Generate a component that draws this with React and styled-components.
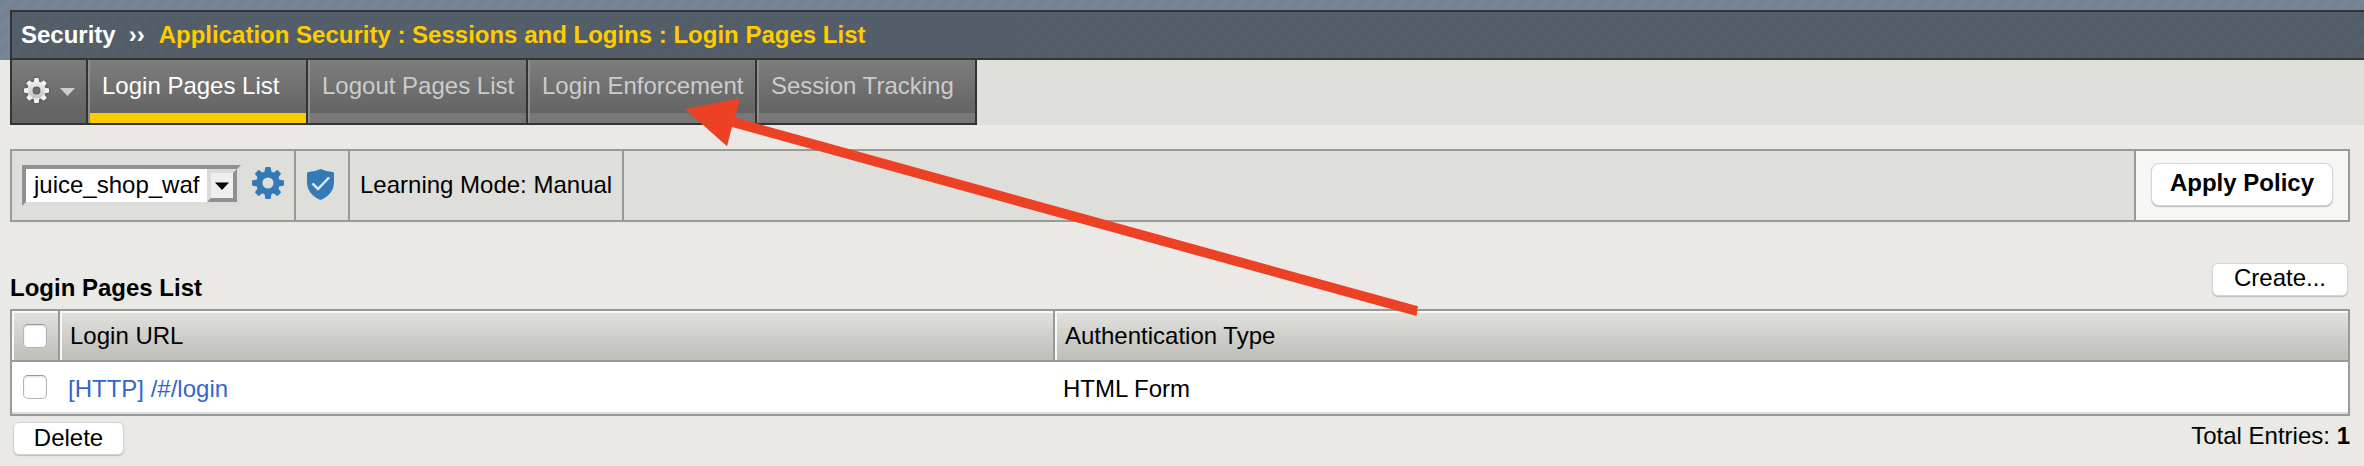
import React from 'react';
import styled, { createGlobalStyle } from 'styled-components';

const Global = createGlobalStyle`
  * { box-sizing: border-box; }
  body {
    margin: 0;
    background: #eae9e5;
    color: #000;
    font: 24px/28px "Liberation Sans", Arial, sans-serif;
    overflow: hidden;
  }
`;

const stripes = (a, b) =>
  `repeating-linear-gradient(135deg, ${a} 0 4.5px, ${b} 6px 10px, ${a} 11.31px)`;

const Page = styled.div`
  position: relative;
  width: 2364px;
  height: 466px;
`;
const TopBand = styled.header`
  height: 60px;
  padding: 10px 0 0 10px;
  background: ${stripes('#748394', '#778697')};
`;
const Breadcrumb = styled.div`
  display: flex;
  height: 50px;
  padding: 9px 0 0 9px;
  border: 2px solid #333;
  border-right: 0;
  background: ${stripes('#525d68', '#545f69')};
  color: #fff;
  font-weight: bold;
  white-space: pre;
`;
const Separator = styled.span`
  margin: 0 14px 0 13px;
`;
const Trail = styled.span`
  color: #fc0;
`;
const TabStrip = styled.nav`
  display: flex;
  height: 65px;
  margin-left: 10px;
  background: #dededa;
`;
const tabFill = 'linear-gradient(#7d7d7d, #646464 53px)';
const MenuTab = styled.div`
  display: flex;
  align-items: center;
  width: 78px;
  padding: 0 0 2px 12px;
  gap: 11px;
  border: solid #333;
  border-width: 0 2px 2px;
  background: ${tabFill};
`;
const Tab = styled.div`
  width: ${p => p.$w}px;
  padding: 12px 0 0 14px;
  border: solid #333;
  border-width: 0 2px 2px 0;
  box-shadow: inset 2px 0 #8e8e8e;
  background: linear-gradient(${p => (p.$active ? '#fc0, #fc0' : '#777, #777')}) 2px 53px / 100% 10px no-repeat,
    ${tabFill};
  color: ${p => (p.$active ? '#fff' : '#ccc')};
  white-space: nowrap;
`;
const PolicyBar = styled.section`
  display: flex;
  width: 2340px;
  height: 73px;
  margin: 24px 0 0 10px;
  border: 2px solid #999;
  background: #dededa;
`;
const PolicyCell = styled.div`
  display: flex;
  align-items: flex-start;
  width: ${p => p.$w}px;
  padding: ${p => p.$pad};
  border-right: 2px solid #999;
  white-space: nowrap;
`;
const Fill = styled.div`
  flex: 1;
`;
const ApplyCell = styled.div`
  width: 214px;
  padding: 12px 0 0 15px;
  border-left: 2px solid #999;
  background: #f7f6f5;
`;
const Select = styled.div`
  display: flex;
  width: 219px;
  height: 41px;
  margin-right: 11px;
  border: 4px solid;
  border-color: #909090 #dcdcdc #dcdcdc #909090;
  background: #fff;
`;
const SelectValue = styled.span`
  width: 181px;
  padding: 2px 0 0 8px;
`;
const SelectArrow = styled.span`
  display: flex;
  align-items: center;
  justify-content: center;
  width: 30px;
  height: 33px;
  border: 4px solid;
  border-color: #dadada #909090 #909090 #dadada;
  background: #efefef;
`;
const GearSlot = styled.span`
  display: flex;
  margin-top: 2px;
`;
const Button = styled.button`
  width: ${p => p.$w}px;
  height: ${p => p.$h}px;
  padding: ${p => p.$pad || '0 0 4px'};
  border: 1px solid #d4d4d2;
  border-radius: ${p => p.$r || 6}px;
  box-shadow: 0 1px 1px #bbb;
  background: #fff;
  color: #000;
  font: inherit;
  font-weight: ${p => (p.$bold ? 'bold' : 'normal')};
  line-height: 28px;
`;
const ListHead = styled.div`
  display: flex;
  justify-content: space-between;
  align-items: flex-start;
  width: 2338px;
  height: 46px;
  margin: 41px 0 0 10px;
`;
const Title = styled.h1`
  margin: 11px 0 0;
  font-size: 24px;
  line-height: 28px;
`;
const Table = styled.div`
  width: 2340px;
  height: 107px;
  margin-left: 10px;
  border: 2px solid #999;
`;
const Row = styled.div`
  display: grid;
  grid-template-columns: 48px 995px 1fr;
`;
const HeadRow = styled(Row)`
  height: 51px;
  border-bottom: 2px solid #999;
  background: linear-gradient(#dfdfdb 4px, #c0bfba 46px);
`;
const HeadCell = styled.div`
  padding: ${p => p.$pad || '11px 0 0 10px'};
  border-right: ${p => (p.$last ? 0 : '2px solid #999')};
  box-shadow: inset 2px 2px #f8f8f6;
`;
const BodyRow = styled(Row)`
  height: 52px;
  border-bottom: 2px solid #ddd;
  background: #fff;
`;
const Cell = styled.div`
  padding: ${p => p.$pad};
`;
const Link = styled.a`
  color: #36c;
`;
const Checkbox = styled.span`
  display: block;
  width: 24px;
  height: 24px;
  border: 1px solid #b4b4b4;
  border-top-color: #999;
  border-radius: 5px;
  background: #fff;
  box-shadow: inset 0 1px 2px #ddd;
`;
const Footer = styled.footer`
  display: flex;
  justify-content: space-between;
  align-items: flex-start;
  width: 2337px;
  margin: 6px 0 0 13px;
`;
const Arrow = styled.svg`
  position: absolute;
  left: 0;
  top: 0;
  pointer-events: none;
`;
const GearSvg = styled.svg`
  overflow: visible;
  filter: ${p => (p.$shadow ? 'drop-shadow(0 0 1px #444)' : 'none')};
`;

function Gear({ size, fill, hole, shadow }) {
  const angles = [0, 45, 90, 135, 180, 225, 270, 315];
  const maskId = shadow ? 'menu-gear' : 'policy-gear';
  return (
    <GearSvg width={size} height={size} viewBox="0 0 32 32" $shadow={shadow}>
      <defs>
        <linearGradient id="silver" gradientUnits="userSpaceOnUse" x1="0" y1="2" x2="0" y2="30">
          <stop offset="0" stopColor="#f4f4f4" />
          <stop offset="1" stopColor="#b8b8b8" />
        </linearGradient>
        <mask id={maskId}>
          <rect width="32" height="32" fill="#fff" />
          <circle cx="16" cy="16" r={hole} fill="#000" />
        </mask>
      </defs>
      <g mask={`url(#${maskId})`} fill={fill}>
        <circle cx="16" cy="16" r="11.8" />
        {angles.map(a => (
          <path key={a} d="M12.4 6 13.2 .8Q13.4 0 14.2 0H17.8Q18.6 0 18.8 .8L19.6 6Z" transform={`rotate(${a} 16 16)`} />
        ))}
      </g>
    </GearSvg>
  );
}

export default function App() {
  return (
    <Page>
      <Global />
      <TopBand>
        <Breadcrumb>
          Security<Separator>››</Separator>
          <Trail>Application Security : Sessions and Logins : Login Pages List</Trail>
        </Breadcrumb>
      </TopBand>
      <TabStrip>
        <MenuTab>
          <Gear size={25} fill="url(#silver)" hole={5} shadow />
          <svg width="15" height="9" viewBox="0 0 15 9" overflow="visible">
            <path d="M0 2H15L7.5 10Z" fill="#ccc" />
          </svg>
        </MenuTab>
        <Tab $w={220} $active>Login Pages List</Tab>
        <Tab $w={220}>Logout Pages List</Tab>
        <Tab $w={229}>Login Enforcement</Tab>
        <Tab $w={220}>Session Tracking</Tab>
      </TabStrip>
      <PolicyBar>
        <PolicyCell $w={284} $pad="14px 0 0 10px">
          <Select>
            <SelectValue>juice_shop_waf</SelectValue>
            <SelectArrow>
              <svg width="14" height="8" viewBox="0 0 14 8"><path d="M0 .5H14L7 8Z" /></svg>
            </SelectArrow>
          </Select>
          <GearSlot><Gear size={32} fill="#337ab7" hole={5.6} /></GearSlot>
        </PolicyCell>
        <PolicyCell $w={54} $pad="18px 0 0 11px">
          <svg width="27" height="31" viewBox="0 0 27 31">
            <path d="M13.5 0Q20 3 26 3Q27 3 27 5V13Q27 25 13.5 31Q0 25 0 13V5Q0 3 1 3Q7 3 13.5 0Z" fill="#337ab7" />
            <path d="M5.5 14.5 11 20 22 8.5" fill="none" stroke="#dcebf6" strokeWidth="2.5" />
          </svg>
        </PolicyCell>
        <PolicyCell $w={274} $pad="20px 0 0 10px">Learning Mode: Manual</PolicyCell>
        <Fill />
        <ApplyCell><Button $w={182} $h={43} $r={8} $bold $pad="0 0 3px">Apply Policy</Button></ApplyCell>
      </PolicyBar>
      <ListHead>
        <Title>Login Pages List</Title>
        <Button $w={136} $h={33}>Create...</Button>
      </ListHead>
      <Table>
        <HeadRow>
          <HeadCell $pad="13px 0 0 11px"><Checkbox /></HeadCell>
          <HeadCell>Login URL</HeadCell>
          <HeadCell $last>Authentication Type</HeadCell>
        </HeadRow>
        <BodyRow>
          <Cell $pad="13px 0 0 11px"><Checkbox /></Cell>
          <Cell $pad="13px 0 0 8px"><Link>[HTTP] /#/login</Link></Cell>
          <Cell $pad="13px 0 0 8px">HTML Form</Cell>
        </BodyRow>
      </Table>
      <Footer>
        <Button $w={111} $h={33} $pad="0 0 1px">Delete</Button>
        <div>Total Entries: <b>1</b></div>
      </Footer>
      <Arrow width="2364" height="466" viewBox="0 0 2364 466">
        <path d="M685 109 740 98.3 735 117.5 1418 306.3 1416.5 316 732 127 727 146.3Z" fill="#ed4126" />
      </Arrow>
    </Page>
  );
}
